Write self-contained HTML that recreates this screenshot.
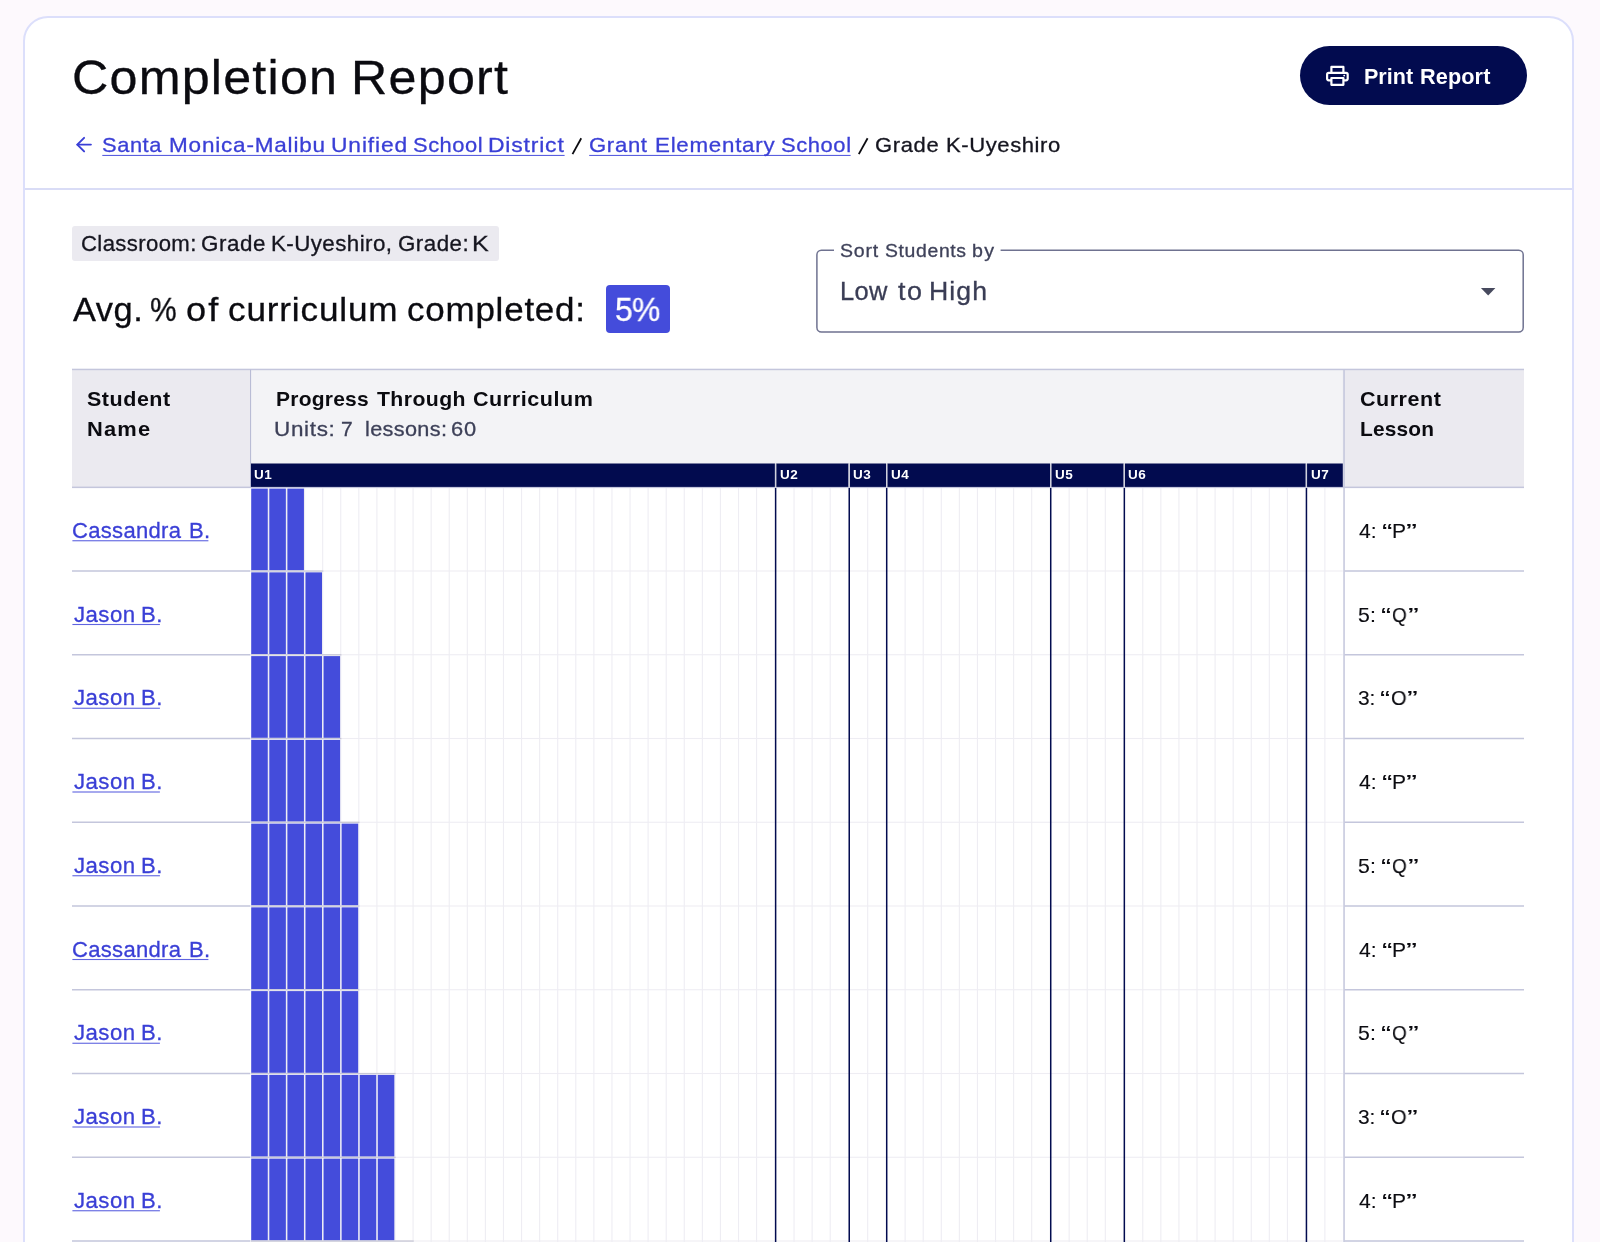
<!DOCTYPE html><html><head><meta charset="utf-8"><title>Completion Report</title><style>
html,body{margin:0;padding:0;width:1600px;height:1242px;overflow:hidden;background:#fdf9fd;font-family:'Liberation Sans', sans-serif;}
.a{position:absolute;}
.t{position:absolute;line-height:1;white-space:pre;will-change:transform;}
svg{position:absolute;overflow:visible;}
</style></head><body>
<div class="a" style="left:23px;top:16px;width:1547px;height:1400px;border:2px solid #dcdffb;border-radius:25px;background:#fff"></div>
<div class="a" style="left:25px;top:188px;width:1547px;height:2px;background:#d9dcf6"></div>
<div class="a" style="left:1300px;top:46.3px;width:227px;height:59px;border-radius:30px;background:#020b4f"></div>
<svg style="left:0;top:0" width="1600" height="200" viewBox="0 0 1600 200">
<g fill="none" stroke="#fff" stroke-width="2.2" stroke-linejoin="round">
<path d="M1331.4 72.9 V66.9 H1343.4 V72.9"/>
<path d="M1331.4 80.3 H1328.8 Q1327.1 80.3 1327.1 78.6 V74.6 Q1327.1 72.9 1328.8 72.9 H1346 Q1347.7 72.9 1347.7 74.6 V78.6 Q1347.7 80.3 1346 80.3 H1343.4"/>
<rect x="1331.4" y="78" width="12" height="6.8"/>
</g><circle cx="1344.2" cy="75.6" r="0.95" fill="#fff"/>
<g fill="none" stroke="#3a3fd6" stroke-width="1.95" stroke-linecap="round" stroke-linejoin="round">
<path d="M90.9 144.6 H77.4"/><path d="M84.1 137.9 L77.3 144.6 L84.1 151.4"/></g>
<path d="M581.25 138.2 L572.5 154.1" stroke="#0b0b10" stroke-width="1.8"/>
<path d="M867.6 138.2 L858.8 154.1" stroke="#0b0b10" stroke-width="1.8"/>
<rect x="102.3" y="154.9" width="462.3" height="1.1" fill="#5a5fdf"/>
<rect x="589.2" y="154.9" width="261.4" height="1.1" fill="#5a5fdf"/>
</svg>
<div class="a" style="left:72.4px;top:226px;width:426.6px;height:35px;border-radius:3px;background:#ebeaf0"></div>
<div class="a" style="left:606px;top:285.2px;width:64px;height:47.6px;border-radius:4px;background:#444cdb"></div>
<svg style="left:0;top:0" width="1600" height="400" viewBox="0 0 1600 400">
<rect x="816.9" y="250.3" width="706.3" height="81.8" rx="4.5" fill="none" stroke="#6f7290" stroke-width="1.5"/>
<rect x="834" y="246" width="166.6" height="8" fill="#fff"/>
<path d="M1480.9 288 H1495.4 L1488.15 295.5 Z" fill="#474a5e"/></svg>
<svg style="left:0;top:0" width="1600" height="1242" viewBox="0 0 1600 1242"><rect x="72" y="369.5" width="1452" height="118" fill="#ebeaf0"/><rect x="251" y="369.5" width="1091.80" height="118" fill="#f3f3f6"/><rect x="72" y="368.7" width="1452" height="1.5" fill="#c4c6dc"/><rect x="72" y="486.6" width="1452" height="1.5" fill="#c4c6dc"/><rect x="250" y="369.5" width="1.1" height="118" fill="#b9bcd5"/><rect x="1343.3" y="369.5" width="1.5" height="880" fill="#c4c6dc"/><rect x="72" y="570.25" width="178.5" height="1.5" fill="#c4c6dc"/><rect x="1344.5" y="570.25" width="179.5" height="1.5" fill="#c4c6dc"/><rect x="250.5" y="570.45" width="1092.30" height="1.1" fill="#eeedf3"/><rect x="72" y="654.00" width="178.5" height="1.5" fill="#c4c6dc"/><rect x="1344.5" y="654.00" width="179.5" height="1.5" fill="#c4c6dc"/><rect x="250.5" y="654.20" width="1092.30" height="1.1" fill="#eeedf3"/><rect x="72" y="737.75" width="178.5" height="1.5" fill="#c4c6dc"/><rect x="1344.5" y="737.75" width="179.5" height="1.5" fill="#c4c6dc"/><rect x="250.5" y="737.95" width="1092.30" height="1.1" fill="#eeedf3"/><rect x="72" y="821.50" width="178.5" height="1.5" fill="#c4c6dc"/><rect x="1344.5" y="821.50" width="179.5" height="1.5" fill="#c4c6dc"/><rect x="250.5" y="821.70" width="1092.30" height="1.1" fill="#eeedf3"/><rect x="72" y="905.25" width="178.5" height="1.5" fill="#c4c6dc"/><rect x="1344.5" y="905.25" width="179.5" height="1.5" fill="#c4c6dc"/><rect x="250.5" y="905.45" width="1092.30" height="1.1" fill="#eeedf3"/><rect x="72" y="989.00" width="178.5" height="1.5" fill="#c4c6dc"/><rect x="1344.5" y="989.00" width="179.5" height="1.5" fill="#c4c6dc"/><rect x="250.5" y="989.20" width="1092.30" height="1.1" fill="#eeedf3"/><rect x="72" y="1072.75" width="178.5" height="1.5" fill="#c4c6dc"/><rect x="1344.5" y="1072.75" width="179.5" height="1.5" fill="#c4c6dc"/><rect x="250.5" y="1072.95" width="1092.30" height="1.1" fill="#eeedf3"/><rect x="72" y="1156.50" width="178.5" height="1.5" fill="#c4c6dc"/><rect x="1344.5" y="1156.50" width="179.5" height="1.5" fill="#c4c6dc"/><rect x="250.5" y="1156.70" width="1092.30" height="1.1" fill="#eeedf3"/><rect x="72" y="1240.25" width="178.5" height="1.5" fill="#c4c6dc"/><rect x="1344.5" y="1240.25" width="179.5" height="1.5" fill="#c4c6dc"/><rect x="250.5" y="1240.45" width="1092.30" height="1.1" fill="#eeedf3"/><rect x="267.88" y="488" width="1.1" height="760" fill="#eeedf3"/><rect x="285.96" y="488" width="1.1" height="760" fill="#eeedf3"/><rect x="304.04" y="488" width="1.1" height="760" fill="#eeedf3"/><rect x="322.12" y="488" width="1.1" height="760" fill="#eeedf3"/><rect x="340.20" y="488" width="1.1" height="760" fill="#eeedf3"/><rect x="358.28" y="488" width="1.1" height="760" fill="#eeedf3"/><rect x="376.36" y="488" width="1.1" height="760" fill="#eeedf3"/><rect x="394.44" y="488" width="1.1" height="760" fill="#eeedf3"/><rect x="412.52" y="488" width="1.1" height="760" fill="#eeedf3"/><rect x="430.60" y="488" width="1.1" height="760" fill="#eeedf3"/><rect x="448.68" y="488" width="1.1" height="760" fill="#eeedf3"/><rect x="466.76" y="488" width="1.1" height="760" fill="#eeedf3"/><rect x="484.84" y="488" width="1.1" height="760" fill="#eeedf3"/><rect x="502.92" y="488" width="1.1" height="760" fill="#eeedf3"/><rect x="521.00" y="488" width="1.1" height="760" fill="#eeedf3"/><rect x="539.08" y="488" width="1.1" height="760" fill="#eeedf3"/><rect x="557.16" y="488" width="1.1" height="760" fill="#eeedf3"/><rect x="575.24" y="488" width="1.1" height="760" fill="#eeedf3"/><rect x="593.32" y="488" width="1.1" height="760" fill="#eeedf3"/><rect x="611.40" y="488" width="1.1" height="760" fill="#eeedf3"/><rect x="629.48" y="488" width="1.1" height="760" fill="#eeedf3"/><rect x="647.56" y="488" width="1.1" height="760" fill="#eeedf3"/><rect x="665.64" y="488" width="1.1" height="760" fill="#eeedf3"/><rect x="683.72" y="488" width="1.1" height="760" fill="#eeedf3"/><rect x="701.80" y="488" width="1.1" height="760" fill="#eeedf3"/><rect x="719.88" y="488" width="1.1" height="760" fill="#eeedf3"/><rect x="737.96" y="488" width="1.1" height="760" fill="#eeedf3"/><rect x="756.04" y="488" width="1.1" height="760" fill="#eeedf3"/><rect x="793.50" y="488" width="1.1" height="760" fill="#eeedf3"/><rect x="811.58" y="488" width="1.1" height="760" fill="#eeedf3"/><rect x="829.66" y="488" width="1.1" height="760" fill="#eeedf3"/><rect x="867.12" y="488" width="1.1" height="760" fill="#eeedf3"/><rect x="904.58" y="488" width="1.1" height="760" fill="#eeedf3"/><rect x="922.66" y="488" width="1.1" height="760" fill="#eeedf3"/><rect x="940.74" y="488" width="1.1" height="760" fill="#eeedf3"/><rect x="958.82" y="488" width="1.1" height="760" fill="#eeedf3"/><rect x="976.90" y="488" width="1.1" height="760" fill="#eeedf3"/><rect x="994.98" y="488" width="1.1" height="760" fill="#eeedf3"/><rect x="1013.06" y="488" width="1.1" height="760" fill="#eeedf3"/><rect x="1031.14" y="488" width="1.1" height="760" fill="#eeedf3"/><rect x="1068.60" y="488" width="1.1" height="760" fill="#eeedf3"/><rect x="1086.68" y="488" width="1.1" height="760" fill="#eeedf3"/><rect x="1104.76" y="488" width="1.1" height="760" fill="#eeedf3"/><rect x="1142.22" y="488" width="1.1" height="760" fill="#eeedf3"/><rect x="1160.30" y="488" width="1.1" height="760" fill="#eeedf3"/><rect x="1178.38" y="488" width="1.1" height="760" fill="#eeedf3"/><rect x="1196.46" y="488" width="1.1" height="760" fill="#eeedf3"/><rect x="1214.54" y="488" width="1.1" height="760" fill="#eeedf3"/><rect x="1232.62" y="488" width="1.1" height="760" fill="#eeedf3"/><rect x="1250.70" y="488" width="1.1" height="760" fill="#eeedf3"/><rect x="1268.78" y="488" width="1.1" height="760" fill="#eeedf3"/><rect x="1286.86" y="488" width="1.1" height="760" fill="#eeedf3"/><rect x="1324.32" y="488" width="1.1" height="760" fill="#eeedf3"/><rect x="251.20" y="488.60" width="16.58" height="81.75" fill="#444cdb"/><rect x="269.28" y="488.60" width="16.58" height="81.75" fill="#444cdb"/><rect x="287.36" y="488.60" width="16.58" height="81.75" fill="#444cdb"/><rect x="251.20" y="572.35" width="16.58" height="81.75" fill="#444cdb"/><rect x="269.28" y="572.35" width="16.58" height="81.75" fill="#444cdb"/><rect x="287.36" y="572.35" width="16.58" height="81.75" fill="#444cdb"/><rect x="305.44" y="572.35" width="16.58" height="81.75" fill="#444cdb"/><rect x="251.20" y="656.10" width="16.58" height="81.75" fill="#444cdb"/><rect x="269.28" y="656.10" width="16.58" height="81.75" fill="#444cdb"/><rect x="287.36" y="656.10" width="16.58" height="81.75" fill="#444cdb"/><rect x="305.44" y="656.10" width="16.58" height="81.75" fill="#444cdb"/><rect x="323.52" y="656.10" width="16.58" height="81.75" fill="#444cdb"/><rect x="251.20" y="739.85" width="16.58" height="81.75" fill="#444cdb"/><rect x="269.28" y="739.85" width="16.58" height="81.75" fill="#444cdb"/><rect x="287.36" y="739.85" width="16.58" height="81.75" fill="#444cdb"/><rect x="305.44" y="739.85" width="16.58" height="81.75" fill="#444cdb"/><rect x="323.52" y="739.85" width="16.58" height="81.75" fill="#444cdb"/><rect x="251.20" y="823.60" width="16.58" height="81.75" fill="#444cdb"/><rect x="269.28" y="823.60" width="16.58" height="81.75" fill="#444cdb"/><rect x="287.36" y="823.60" width="16.58" height="81.75" fill="#444cdb"/><rect x="305.44" y="823.60" width="16.58" height="81.75" fill="#444cdb"/><rect x="323.52" y="823.60" width="16.58" height="81.75" fill="#444cdb"/><rect x="341.60" y="823.60" width="16.58" height="81.75" fill="#444cdb"/><rect x="251.20" y="907.35" width="16.58" height="81.75" fill="#444cdb"/><rect x="269.28" y="907.35" width="16.58" height="81.75" fill="#444cdb"/><rect x="287.36" y="907.35" width="16.58" height="81.75" fill="#444cdb"/><rect x="305.44" y="907.35" width="16.58" height="81.75" fill="#444cdb"/><rect x="323.52" y="907.35" width="16.58" height="81.75" fill="#444cdb"/><rect x="341.60" y="907.35" width="16.58" height="81.75" fill="#444cdb"/><rect x="251.20" y="991.10" width="16.58" height="81.75" fill="#444cdb"/><rect x="269.28" y="991.10" width="16.58" height="81.75" fill="#444cdb"/><rect x="287.36" y="991.10" width="16.58" height="81.75" fill="#444cdb"/><rect x="305.44" y="991.10" width="16.58" height="81.75" fill="#444cdb"/><rect x="323.52" y="991.10" width="16.58" height="81.75" fill="#444cdb"/><rect x="341.60" y="991.10" width="16.58" height="81.75" fill="#444cdb"/><rect x="251.20" y="1074.85" width="16.58" height="81.75" fill="#444cdb"/><rect x="269.28" y="1074.85" width="16.58" height="81.75" fill="#444cdb"/><rect x="287.36" y="1074.85" width="16.58" height="81.75" fill="#444cdb"/><rect x="305.44" y="1074.85" width="16.58" height="81.75" fill="#444cdb"/><rect x="323.52" y="1074.85" width="16.58" height="81.75" fill="#444cdb"/><rect x="341.60" y="1074.85" width="16.58" height="81.75" fill="#444cdb"/><rect x="359.68" y="1074.85" width="16.58" height="81.75" fill="#444cdb"/><rect x="377.76" y="1074.85" width="16.58" height="81.75" fill="#444cdb"/><rect x="251.20" y="1158.60" width="16.58" height="81.75" fill="#444cdb"/><rect x="269.28" y="1158.60" width="16.58" height="81.75" fill="#444cdb"/><rect x="287.36" y="1158.60" width="16.58" height="81.75" fill="#444cdb"/><rect x="305.44" y="1158.60" width="16.58" height="81.75" fill="#444cdb"/><rect x="323.52" y="1158.60" width="16.58" height="81.75" fill="#444cdb"/><rect x="341.60" y="1158.60" width="16.58" height="81.75" fill="#444cdb"/><rect x="359.68" y="1158.60" width="16.58" height="81.75" fill="#444cdb"/><rect x="377.76" y="1158.60" width="16.58" height="81.75" fill="#444cdb"/><rect x="251" y="570.40" width="72.32" height="1.3" fill="#c8c8d6"/><rect x="251" y="654.15" width="90.40" height="1.3" fill="#c8c8d6"/><rect x="251" y="737.90" width="90.40" height="1.3" fill="#c8c8d6"/><rect x="251" y="821.65" width="108.48" height="1.3" fill="#c8c8d6"/><rect x="251" y="905.40" width="108.48" height="1.3" fill="#c8c8d6"/><rect x="251" y="989.15" width="108.48" height="1.3" fill="#c8c8d6"/><rect x="251" y="1072.90" width="144.64" height="1.3" fill="#c8c8d6"/><rect x="251" y="1156.65" width="144.64" height="1.3" fill="#c8c8d6"/><rect x="251" y="1240.40" width="162.72" height="1.3" fill="#c8c8d6"/><rect x="251.00" y="463.5" width="523.92" height="23.4" fill="#020b4f"/><rect x="776.22" y="463.5" width="72.32" height="23.4" fill="#020b4f"/><rect x="774.92" y="463.5" width="1.3" height="23.4" fill="#cfd0dc"/><rect x="774.87" y="488" width="1.5" height="760" fill="#020b4f"/><rect x="849.84" y="463.5" width="36.16" height="23.4" fill="#020b4f"/><rect x="848.54" y="463.5" width="1.3" height="23.4" fill="#cfd0dc"/><rect x="848.49" y="488" width="1.5" height="760" fill="#020b4f"/><rect x="887.30" y="463.5" width="162.72" height="23.4" fill="#020b4f"/><rect x="886.00" y="463.5" width="1.3" height="23.4" fill="#cfd0dc"/><rect x="885.95" y="488" width="1.5" height="760" fill="#020b4f"/><rect x="1051.32" y="463.5" width="72.32" height="23.4" fill="#020b4f"/><rect x="1050.02" y="463.5" width="1.3" height="23.4" fill="#cfd0dc"/><rect x="1049.97" y="488" width="1.5" height="760" fill="#020b4f"/><rect x="1124.94" y="463.5" width="180.80" height="23.4" fill="#020b4f"/><rect x="1123.64" y="463.5" width="1.3" height="23.4" fill="#cfd0dc"/><rect x="1123.59" y="488" width="1.5" height="760" fill="#020b4f"/><rect x="1307.04" y="463.5" width="35.76" height="23.4" fill="#020b4f"/><rect x="1305.74" y="463.5" width="1.3" height="23.4" fill="#cfd0dc"/><rect x="1305.69" y="488" width="1.5" height="760" fill="#020b4f"/></svg>
<div class="t" style="left:253.70px;top:467.90px;font-size:13.5px;font-weight:700;color:#fff;letter-spacing:0.4px">U1</div>
<div class="t" style="left:779.72px;top:467.90px;font-size:13.5px;font-weight:700;color:#fff;letter-spacing:0.4px">U2</div>
<div class="t" style="left:853.34px;top:467.90px;font-size:13.5px;font-weight:700;color:#fff;letter-spacing:0.4px">U3</div>
<div class="t" style="left:890.80px;top:467.90px;font-size:13.5px;font-weight:700;color:#fff;letter-spacing:0.4px">U4</div>
<div class="t" style="left:1054.82px;top:467.90px;font-size:13.5px;font-weight:700;color:#fff;letter-spacing:0.4px">U5</div>
<div class="t" style="left:1128.44px;top:467.90px;font-size:13.5px;font-weight:700;color:#fff;letter-spacing:0.4px">U6</div>
<div class="t" style="left:1310.54px;top:467.90px;font-size:13.5px;font-weight:700;color:#fff;letter-spacing:0.4px">U7</div>
<svg style="left:0;top:0" width="1600" height="1242" viewBox="0 0 1600 1242"><rect x="72.4" y="540.20" width="136.00" height="1.1" fill="#5f64e0"/><rect x="72.4" y="623.95" width="87.50" height="1.1" fill="#5f64e0"/><rect x="72.4" y="707.70" width="87.50" height="1.1" fill="#5f64e0"/><rect x="72.4" y="791.45" width="87.50" height="1.1" fill="#5f64e0"/><rect x="72.4" y="875.20" width="87.50" height="1.1" fill="#5f64e0"/><rect x="72.4" y="958.95" width="136.00" height="1.1" fill="#5f64e0"/><rect x="72.4" y="1042.70" width="87.50" height="1.1" fill="#5f64e0"/><rect x="72.4" y="1126.45" width="87.50" height="1.1" fill="#5f64e0"/><rect x="72.4" y="1210.20" width="87.50" height="1.1" fill="#5f64e0"/></svg>
<div class="t" style="left:72.16px;top:54.00px;font-size:48px;font-weight:400;color:#0b0b10;letter-spacing:1.166px;transform:scaleX(1.0461);transform-origin:0 0;-webkit-text-stroke:0.3px #0b0b10;">Completion</div>
<div class="t" style="left:351.02px;top:54.00px;font-size:48px;font-weight:400;color:#0b0b10;letter-spacing:1.224px;transform:scaleX(1.0457);transform-origin:0 0;-webkit-text-stroke:0.3px #0b0b10;">Report</div>
<div class="t" style="left:101.96px;top:134.25px;font-size:21px;font-weight:400;color:#3a3fd6;letter-spacing:0.540px;transform:scaleX(1.0417);transform-origin:0 0;-webkit-text-stroke:0.3px #3a3fd6;">Santa</div>
<div class="t" style="left:169.11px;top:134.25px;font-size:21px;font-weight:400;color:#3a3fd6;letter-spacing:0.748px;transform:scaleX(1.0724);transform-origin:0 0;-webkit-text-stroke:0.3px #3a3fd6;">Monica-Malibu</div>
<div class="t" style="left:330.53px;top:134.25px;font-size:21px;font-weight:400;color:#3a3fd6;letter-spacing:0.814px;transform:scaleX(1.0855);transform-origin:0 0;-webkit-text-stroke:0.3px #3a3fd6;">Unified</div>
<div class="t" style="left:412.86px;top:134.25px;font-size:21px;font-weight:400;color:#3a3fd6;letter-spacing:0.508px;transform:scaleX(1.0427);transform-origin:0 0;-webkit-text-stroke:0.3px #3a3fd6;">School</div>
<div class="t" style="left:488.12px;top:134.25px;font-size:21px;font-weight:400;color:#3a3fd6;letter-spacing:0.746px;transform:scaleX(1.0919);transform-origin:0 0;-webkit-text-stroke:0.3px #3a3fd6;">District</div>
<div class="t" style="left:589.20px;top:134.25px;font-size:21px;font-weight:400;color:#3a3fd6;letter-spacing:0.647px;transform:scaleX(1.0524);transform-origin:0 0;-webkit-text-stroke:0.3px #3a3fd6;">Grant</div>
<div class="t" style="left:654.62px;top:134.25px;font-size:21px;font-weight:400;color:#3a3fd6;letter-spacing:0.692px;transform:scaleX(1.0637);transform-origin:0 0;-webkit-text-stroke:0.3px #3a3fd6;">Elementary</div>
<div class="t" style="left:780.85px;top:134.25px;font-size:21px;font-weight:400;color:#3a3fd6;letter-spacing:0.545px;transform:scaleX(1.0460);transform-origin:0 0;-webkit-text-stroke:0.3px #3a3fd6;">School</div>
<div class="t" style="left:875.20px;top:134.25px;font-size:21px;font-weight:400;color:#15151f;letter-spacing:0.627px;transform:scaleX(1.0461);transform-origin:0 0;-webkit-text-stroke:0.3px #15151f;">Grade</div>
<div class="t" style="left:945.65px;top:134.25px;font-size:21px;font-weight:400;color:#15151f;letter-spacing:0.542px;transform:scaleX(1.0507);transform-origin:0 0;-webkit-text-stroke:0.3px #15151f;">K-Uyeshiro</div>
<div class="t" style="left:1363.90px;top:66.70px;font-size:21.5px;font-weight:700;color:#ffffff;letter-spacing:0.012px;transform:scaleX(1.0010);transform-origin:0 0;">Print</div>
<div class="t" style="left:1419.89px;top:66.70px;font-size:21.5px;font-weight:700;color:#ffffff;letter-spacing:0.109px;transform:scaleX(1.0081);transform-origin:0 0;">Report</div>
<div class="t" style="left:80.87px;top:234.00px;font-size:21.5px;font-weight:400;color:#15151f;letter-spacing:0.350px;transform:scaleX(1.0307);transform-origin:0 0;-webkit-text-stroke:0.3px #15151f;">Classroom:</div>
<div class="t" style="left:201.16px;top:234.00px;font-size:21.5px;font-weight:400;color:#15151f;letter-spacing:0.553px;transform:scaleX(1.0397);transform-origin:0 0;-webkit-text-stroke:0.3px #15151f;">Grade</div>
<div class="t" style="left:271.12px;top:234.00px;font-size:21.5px;font-weight:400;color:#15151f;letter-spacing:0.409px;transform:scaleX(1.0390);transform-origin:0 0;-webkit-text-stroke:0.3px #15151f;">K-Uyeshiro,</div>
<div class="t" style="left:398.06px;top:234.00px;font-size:21.5px;font-weight:400;color:#15151f;letter-spacing:0.462px;transform:scaleX(1.0381);transform-origin:0 0;-webkit-text-stroke:0.3px #15151f;">Grade:</div>
<div class="t" style="left:472.47px;top:234.00px;font-size:21.5px;font-weight:400;color:#15151f;letter-spacing:0.000px;transform:scaleX(1.1667);transform-origin:0 0;-webkit-text-stroke:0.3px #15151f;">K</div>
<div class="t" style="left:73.10px;top:293.25px;font-size:33.5px;font-weight:400;color:#0b0b10;letter-spacing:0.536px;transform:scaleX(1.0262);transform-origin:0 0;-webkit-text-stroke:0.3px #0b0b10;">Avg.</div>
<div class="t" style="left:150.36px;top:293.25px;font-size:33.5px;font-weight:400;color:#0b0b10;letter-spacing:0.000px;transform:scaleX(0.8929);transform-origin:0 0;-webkit-text-stroke:0.3px #0b0b10;">%</div>
<div class="t" style="left:186.42px;top:293.25px;font-size:33.5px;font-weight:400;color:#0b0b10;letter-spacing:1.970px;transform:scaleX(1.0787);transform-origin:0 0;-webkit-text-stroke:0.3px #0b0b10;">of</div>
<div class="t" style="left:228.35px;top:293.25px;font-size:33.5px;font-weight:400;color:#0b0b10;letter-spacing:0.789px;transform:scaleX(1.0493);transform-origin:0 0;-webkit-text-stroke:0.3px #0b0b10;">curriculum</div>
<div class="t" style="left:406.56px;top:293.25px;font-size:33.5px;font-weight:400;color:#0b0b10;letter-spacing:0.745px;transform:scaleX(1.0437);transform-origin:0 0;-webkit-text-stroke:0.3px #0b0b10;">completed:</div>
<div class="t" style="left:614.82px;top:294.00px;font-size:32.5px;font-weight:400;color:#ffffff;letter-spacing:-0.814px;transform:scaleX(0.9822);transform-origin:0 0;-webkit-text-stroke:0.3px #ffffff;">5%</div>
<div class="t" style="left:839.53px;top:242.00px;font-size:18.3px;font-weight:400;color:#3f425a;letter-spacing:0.702px;transform:scaleX(1.0682);transform-origin:0 0;-webkit-text-stroke:0.3px #3f425a;">Sort</div>
<div class="t" style="left:884.54px;top:242.00px;font-size:18.3px;font-weight:400;color:#3f425a;letter-spacing:0.592px;transform:scaleX(1.0620);transform-origin:0 0;-webkit-text-stroke:0.3px #3f425a;">Students</div>
<div class="t" style="left:972.03px;top:242.00px;font-size:18.3px;font-weight:400;color:#3f425a;letter-spacing:1.234px;transform:scaleX(1.0736);transform-origin:0 0;-webkit-text-stroke:0.3px #3f425a;">by</div>
<div class="t" style="left:839.86px;top:279.25px;font-size:25px;font-weight:400;color:#3a3d55;letter-spacing:0.393px;transform:scaleX(1.0182);transform-origin:0 0;-webkit-text-stroke:0.3px #3a3d55;">Low</div>
<div class="t" style="left:897.50px;top:279.25px;font-size:25px;font-weight:400;color:#3a3d55;letter-spacing:1.439px;transform:scaleX(1.0775);transform-origin:0 0;-webkit-text-stroke:0.3px #3a3d55;">to</div>
<div class="t" style="left:929.12px;top:279.25px;font-size:25px;font-weight:400;color:#3a3d55;letter-spacing:0.993px;transform:scaleX(1.0661);transform-origin:0 0;-webkit-text-stroke:0.3px #3a3d55;">High</div>
<div class="t" style="left:86.86px;top:389.20px;font-size:20.6px;font-weight:700;color:#0b0b10;letter-spacing:0.519px;transform:scaleX(1.0428);transform-origin:0 0;">Student</div>
<div class="t" style="left:87.14px;top:419.00px;font-size:20.6px;font-weight:700;color:#0b0b10;letter-spacing:1.082px;transform:scaleX(1.0627);transform-origin:0 0;">Name</div>
<div class="t" style="left:275.88px;top:389.20px;font-size:20.6px;font-weight:700;color:#0b0b10;letter-spacing:0.238px;transform:scaleX(1.0193);transform-origin:0 0;">Progress</div>
<div class="t" style="left:377.30px;top:389.20px;font-size:20.6px;font-weight:700;color:#0b0b10;letter-spacing:0.404px;transform:scaleX(1.0301);transform-origin:0 0;">Through</div>
<div class="t" style="left:472.55px;top:389.20px;font-size:20.6px;font-weight:700;color:#0b0b10;letter-spacing:0.531px;transform:scaleX(1.0463);transform-origin:0 0;">Curriculum</div>
<div class="t" style="left:274.46px;top:418.00px;font-size:21px;font-weight:400;color:#3d4058;letter-spacing:0.645px;transform:scaleX(1.0690);transform-origin:0 0;-webkit-text-stroke:0.3px #3d4058;">Units:</div>
<div class="t" style="left:340.53px;top:418.00px;font-size:21px;font-weight:400;color:#3d4058;letter-spacing:0.000px;transform:scaleX(0.9700);transform-origin:0 0;-webkit-text-stroke:0.3px #3d4058;">7</div>
<div class="t" style="left:364.57px;top:418.00px;font-size:21px;font-weight:400;color:#3d4058;letter-spacing:0.332px;transform:scaleX(1.0324);transform-origin:0 0;-webkit-text-stroke:0.3px #3d4058;">lessons:</div>
<div class="t" style="left:450.76px;top:418.00px;font-size:21px;font-weight:400;color:#3d4058;letter-spacing:0.865px;transform:scaleX(1.0409);transform-origin:0 0;-webkit-text-stroke:0.3px #3d4058;">60</div>
<div class="t" style="left:1359.56px;top:389.25px;font-size:20.6px;font-weight:700;color:#0b0b10;letter-spacing:0.511px;transform:scaleX(1.0438);transform-origin:0 0;">Current</div>
<div class="t" style="left:1359.59px;top:418.90px;font-size:20.6px;font-weight:700;color:#0b0b10;letter-spacing:0.187px;transform:scaleX(1.0136);transform-origin:0 0;">Lesson</div>
<div class="t" style="left:71.98px;top:520.80px;font-size:21.5px;font-weight:400;color:#3a3fd6;letter-spacing:0.305px;transform:scaleX(1.0243);transform-origin:0 0;-webkit-text-stroke:0.3px #3a3fd6;">Cassandra</div>
<div class="t" style="left:188.95px;top:520.80px;font-size:21.5px;font-weight:400;color:#3a3fd6;letter-spacing:0.390px;transform:scaleX(1.0250);transform-origin:0 0;-webkit-text-stroke:0.3px #3a3fd6;">B.</div>
<div class="t" style="left:1359.20px;top:519.90px;font-size:21px;font-weight:400;color:#0b0b10;letter-spacing:0.050px;transform:scaleX(1.0031);transform-origin:0 0;-webkit-text-stroke:0.12px #0b0b10;">4:</div>
<div class="t" style="left:1382.42px;top:519.90px;font-size:21px;font-weight:400;color:#0b0b10;letter-spacing:0.000px;transform:scaleX(1.4800);transform-origin:0 0;-webkit-text-stroke:0.12px #0b0b10;">“</div>
<div class="t" style="left:1392.42px;top:519.90px;font-size:21px;font-weight:400;color:#0b0b10;letter-spacing:0.000px;transform:scaleX(0.9909);transform-origin:0 0;-webkit-text-stroke:0.12px #0b0b10;">P</div>
<div class="t" style="left:1406.32px;top:519.90px;font-size:21px;font-weight:400;color:#0b0b10;letter-spacing:0.000px;transform:scaleX(1.5800);transform-origin:0 0;-webkit-text-stroke:0.12px #0b0b10;">”</div>
<div class="t" style="left:73.50px;top:604.55px;font-size:21.5px;font-weight:400;color:#3a3fd6;letter-spacing:0.436px;transform:scaleX(1.0321);transform-origin:0 0;-webkit-text-stroke:0.3px #3a3fd6;">Jason</div>
<div class="t" style="left:140.84px;top:604.55px;font-size:21.5px;font-weight:400;color:#3a3fd6;letter-spacing:0.438px;transform:scaleX(1.0281);transform-origin:0 0;-webkit-text-stroke:0.3px #3a3fd6;">B.</div>
<div class="t" style="left:1358.19px;top:603.65px;font-size:21px;font-weight:400;color:#0b0b10;letter-spacing:0.197px;transform:scaleX(1.0133);transform-origin:0 0;-webkit-text-stroke:0.12px #0b0b10;">5:</div>
<div class="t" style="left:1380.96px;top:603.65px;font-size:21px;font-weight:400;color:#0b0b10;letter-spacing:0.000px;transform:scaleX(1.4400);transform-origin:0 0;-webkit-text-stroke:0.12px #0b0b10;">“</div>
<div class="t" style="left:1392.10px;top:603.65px;font-size:21px;font-weight:400;color:#0b0b10;letter-spacing:0.000px;transform:scaleX(0.9000);transform-origin:0 0;-webkit-text-stroke:0.12px #0b0b10;">Q</div>
<div class="t" style="left:1407.86px;top:603.65px;font-size:21px;font-weight:400;color:#0b0b10;letter-spacing:0.000px;transform:scaleX(1.5400);transform-origin:0 0;-webkit-text-stroke:0.12px #0b0b10;">”</div>
<div class="t" style="left:73.50px;top:688.30px;font-size:21.5px;font-weight:400;color:#3a3fd6;letter-spacing:0.436px;transform:scaleX(1.0321);transform-origin:0 0;-webkit-text-stroke:0.3px #3a3fd6;">Jason</div>
<div class="t" style="left:140.84px;top:688.30px;font-size:21.5px;font-weight:400;color:#3a3fd6;letter-spacing:0.438px;transform:scaleX(1.0281);transform-origin:0 0;-webkit-text-stroke:0.3px #3a3fd6;">B.</div>
<div class="t" style="left:1357.91px;top:687.40px;font-size:21px;font-weight:400;color:#0b0b10;letter-spacing:-0.101px;transform:scaleX(0.9933);transform-origin:0 0;-webkit-text-stroke:0.12px #0b0b10;">3:</div>
<div class="t" style="left:1380.46px;top:687.40px;font-size:21px;font-weight:400;color:#0b0b10;letter-spacing:0.000px;transform:scaleX(1.4400);transform-origin:0 0;-webkit-text-stroke:0.12px #0b0b10;">“</div>
<div class="t" style="left:1390.75px;top:687.40px;font-size:21px;font-weight:400;color:#0b0b10;letter-spacing:0.000px;transform:scaleX(0.9533);transform-origin:0 0;-webkit-text-stroke:0.12px #0b0b10;">O</div>
<div class="t" style="left:1406.96px;top:687.40px;font-size:21px;font-weight:400;color:#0b0b10;letter-spacing:0.000px;transform:scaleX(1.5400);transform-origin:0 0;-webkit-text-stroke:0.12px #0b0b10;">”</div>
<div class="t" style="left:73.50px;top:772.05px;font-size:21.5px;font-weight:400;color:#3a3fd6;letter-spacing:0.436px;transform:scaleX(1.0321);transform-origin:0 0;-webkit-text-stroke:0.3px #3a3fd6;">Jason</div>
<div class="t" style="left:140.84px;top:772.05px;font-size:21.5px;font-weight:400;color:#3a3fd6;letter-spacing:0.438px;transform:scaleX(1.0281);transform-origin:0 0;-webkit-text-stroke:0.3px #3a3fd6;">B.</div>
<div class="t" style="left:1359.20px;top:771.15px;font-size:21px;font-weight:400;color:#0b0b10;letter-spacing:0.050px;transform:scaleX(1.0031);transform-origin:0 0;-webkit-text-stroke:0.12px #0b0b10;">4:</div>
<div class="t" style="left:1382.42px;top:771.15px;font-size:21px;font-weight:400;color:#0b0b10;letter-spacing:0.000px;transform:scaleX(1.4800);transform-origin:0 0;-webkit-text-stroke:0.12px #0b0b10;">“</div>
<div class="t" style="left:1392.42px;top:771.15px;font-size:21px;font-weight:400;color:#0b0b10;letter-spacing:0.000px;transform:scaleX(0.9909);transform-origin:0 0;-webkit-text-stroke:0.12px #0b0b10;">P</div>
<div class="t" style="left:1406.32px;top:771.15px;font-size:21px;font-weight:400;color:#0b0b10;letter-spacing:0.000px;transform:scaleX(1.5800);transform-origin:0 0;-webkit-text-stroke:0.12px #0b0b10;">”</div>
<div class="t" style="left:73.50px;top:855.80px;font-size:21.5px;font-weight:400;color:#3a3fd6;letter-spacing:0.436px;transform:scaleX(1.0321);transform-origin:0 0;-webkit-text-stroke:0.3px #3a3fd6;">Jason</div>
<div class="t" style="left:140.84px;top:855.80px;font-size:21.5px;font-weight:400;color:#3a3fd6;letter-spacing:0.438px;transform:scaleX(1.0281);transform-origin:0 0;-webkit-text-stroke:0.3px #3a3fd6;">B.</div>
<div class="t" style="left:1358.19px;top:854.90px;font-size:21px;font-weight:400;color:#0b0b10;letter-spacing:0.197px;transform:scaleX(1.0133);transform-origin:0 0;-webkit-text-stroke:0.12px #0b0b10;">5:</div>
<div class="t" style="left:1380.96px;top:854.90px;font-size:21px;font-weight:400;color:#0b0b10;letter-spacing:0.000px;transform:scaleX(1.4400);transform-origin:0 0;-webkit-text-stroke:0.12px #0b0b10;">“</div>
<div class="t" style="left:1392.10px;top:854.90px;font-size:21px;font-weight:400;color:#0b0b10;letter-spacing:0.000px;transform:scaleX(0.9000);transform-origin:0 0;-webkit-text-stroke:0.12px #0b0b10;">Q</div>
<div class="t" style="left:1407.86px;top:854.90px;font-size:21px;font-weight:400;color:#0b0b10;letter-spacing:0.000px;transform:scaleX(1.5400);transform-origin:0 0;-webkit-text-stroke:0.12px #0b0b10;">”</div>
<div class="t" style="left:71.98px;top:939.55px;font-size:21.5px;font-weight:400;color:#3a3fd6;letter-spacing:0.305px;transform:scaleX(1.0243);transform-origin:0 0;-webkit-text-stroke:0.3px #3a3fd6;">Cassandra</div>
<div class="t" style="left:188.95px;top:939.55px;font-size:21.5px;font-weight:400;color:#3a3fd6;letter-spacing:0.390px;transform:scaleX(1.0250);transform-origin:0 0;-webkit-text-stroke:0.3px #3a3fd6;">B.</div>
<div class="t" style="left:1359.20px;top:938.65px;font-size:21px;font-weight:400;color:#0b0b10;letter-spacing:0.050px;transform:scaleX(1.0031);transform-origin:0 0;-webkit-text-stroke:0.12px #0b0b10;">4:</div>
<div class="t" style="left:1382.42px;top:938.65px;font-size:21px;font-weight:400;color:#0b0b10;letter-spacing:0.000px;transform:scaleX(1.4800);transform-origin:0 0;-webkit-text-stroke:0.12px #0b0b10;">“</div>
<div class="t" style="left:1392.42px;top:938.65px;font-size:21px;font-weight:400;color:#0b0b10;letter-spacing:0.000px;transform:scaleX(0.9909);transform-origin:0 0;-webkit-text-stroke:0.12px #0b0b10;">P</div>
<div class="t" style="left:1406.32px;top:938.65px;font-size:21px;font-weight:400;color:#0b0b10;letter-spacing:0.000px;transform:scaleX(1.5800);transform-origin:0 0;-webkit-text-stroke:0.12px #0b0b10;">”</div>
<div class="t" style="left:73.50px;top:1023.30px;font-size:21.5px;font-weight:400;color:#3a3fd6;letter-spacing:0.436px;transform:scaleX(1.0321);transform-origin:0 0;-webkit-text-stroke:0.3px #3a3fd6;">Jason</div>
<div class="t" style="left:140.84px;top:1023.30px;font-size:21.5px;font-weight:400;color:#3a3fd6;letter-spacing:0.438px;transform:scaleX(1.0281);transform-origin:0 0;-webkit-text-stroke:0.3px #3a3fd6;">B.</div>
<div class="t" style="left:1358.19px;top:1022.40px;font-size:21px;font-weight:400;color:#0b0b10;letter-spacing:0.197px;transform:scaleX(1.0133);transform-origin:0 0;-webkit-text-stroke:0.12px #0b0b10;">5:</div>
<div class="t" style="left:1380.96px;top:1022.40px;font-size:21px;font-weight:400;color:#0b0b10;letter-spacing:0.000px;transform:scaleX(1.4400);transform-origin:0 0;-webkit-text-stroke:0.12px #0b0b10;">“</div>
<div class="t" style="left:1392.10px;top:1022.40px;font-size:21px;font-weight:400;color:#0b0b10;letter-spacing:0.000px;transform:scaleX(0.9000);transform-origin:0 0;-webkit-text-stroke:0.12px #0b0b10;">Q</div>
<div class="t" style="left:1407.86px;top:1022.40px;font-size:21px;font-weight:400;color:#0b0b10;letter-spacing:0.000px;transform:scaleX(1.5400);transform-origin:0 0;-webkit-text-stroke:0.12px #0b0b10;">”</div>
<div class="t" style="left:73.50px;top:1107.05px;font-size:21.5px;font-weight:400;color:#3a3fd6;letter-spacing:0.436px;transform:scaleX(1.0321);transform-origin:0 0;-webkit-text-stroke:0.3px #3a3fd6;">Jason</div>
<div class="t" style="left:140.84px;top:1107.05px;font-size:21.5px;font-weight:400;color:#3a3fd6;letter-spacing:0.438px;transform:scaleX(1.0281);transform-origin:0 0;-webkit-text-stroke:0.3px #3a3fd6;">B.</div>
<div class="t" style="left:1357.91px;top:1106.15px;font-size:21px;font-weight:400;color:#0b0b10;letter-spacing:-0.101px;transform:scaleX(0.9933);transform-origin:0 0;-webkit-text-stroke:0.12px #0b0b10;">3:</div>
<div class="t" style="left:1380.46px;top:1106.15px;font-size:21px;font-weight:400;color:#0b0b10;letter-spacing:0.000px;transform:scaleX(1.4400);transform-origin:0 0;-webkit-text-stroke:0.12px #0b0b10;">“</div>
<div class="t" style="left:1390.75px;top:1106.15px;font-size:21px;font-weight:400;color:#0b0b10;letter-spacing:0.000px;transform:scaleX(0.9533);transform-origin:0 0;-webkit-text-stroke:0.12px #0b0b10;">O</div>
<div class="t" style="left:1406.96px;top:1106.15px;font-size:21px;font-weight:400;color:#0b0b10;letter-spacing:0.000px;transform:scaleX(1.5400);transform-origin:0 0;-webkit-text-stroke:0.12px #0b0b10;">”</div>
<div class="t" style="left:73.50px;top:1190.80px;font-size:21.5px;font-weight:400;color:#3a3fd6;letter-spacing:0.436px;transform:scaleX(1.0321);transform-origin:0 0;-webkit-text-stroke:0.3px #3a3fd6;">Jason</div>
<div class="t" style="left:140.84px;top:1190.80px;font-size:21.5px;font-weight:400;color:#3a3fd6;letter-spacing:0.438px;transform:scaleX(1.0281);transform-origin:0 0;-webkit-text-stroke:0.3px #3a3fd6;">B.</div>
<div class="t" style="left:1359.20px;top:1189.90px;font-size:21px;font-weight:400;color:#0b0b10;letter-spacing:0.050px;transform:scaleX(1.0031);transform-origin:0 0;-webkit-text-stroke:0.12px #0b0b10;">4:</div>
<div class="t" style="left:1382.42px;top:1189.90px;font-size:21px;font-weight:400;color:#0b0b10;letter-spacing:0.000px;transform:scaleX(1.4800);transform-origin:0 0;-webkit-text-stroke:0.12px #0b0b10;">“</div>
<div class="t" style="left:1392.42px;top:1189.90px;font-size:21px;font-weight:400;color:#0b0b10;letter-spacing:0.000px;transform:scaleX(0.9909);transform-origin:0 0;-webkit-text-stroke:0.12px #0b0b10;">P</div>
<div class="t" style="left:1406.32px;top:1189.90px;font-size:21px;font-weight:400;color:#0b0b10;letter-spacing:0.000px;transform:scaleX(1.5800);transform-origin:0 0;-webkit-text-stroke:0.12px #0b0b10;">”</div>
</body></html>
